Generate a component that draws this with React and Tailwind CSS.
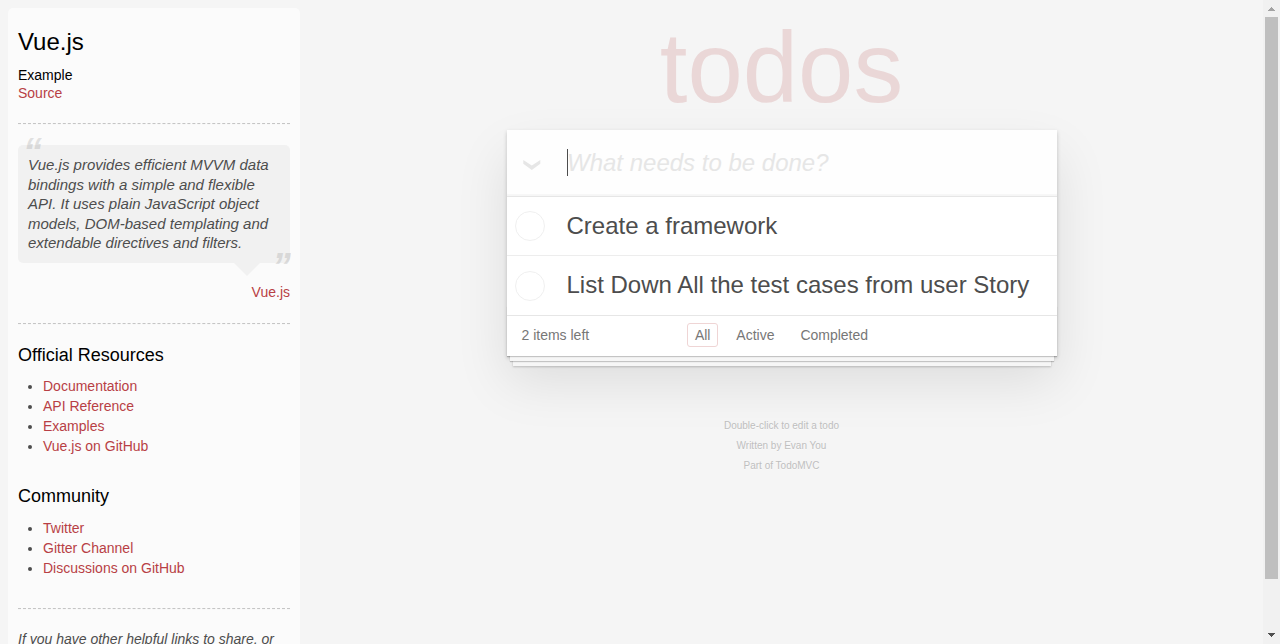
const resources = ['Documentation', 'API Reference', 'Examples', 'Vue.js on GitHub'];
const community = ['Twitter', 'Gitter Channel', 'Discussions on GitHub'];
const todos = ['Create a framework', 'List Down All the test cases from user Story'];
const filters = ['All', 'Active', 'Completed'];

function Divider() {
  return <hr className="my-5 border-0 border-y border-dashed border-t-[#c5c5c5] border-b-[#f7f7f7]" />;
}

function LinkList({ title, links }) {
  return (
    <section>
      <h4 className="mb-2.5 text-[18px] leading-[21.6px] text-black">{title}</h4>
      <ul className="mb-[30px] ml-[25px] list-disc">
        {links.map((link) => (
          <li key={link} className="leading-5">
            <a className="text-[#b83f45]">{link}</a>
          </li>
        ))}
      </ul>
    </section>
  );
}

function Sidebar() {
  return (
    <aside className="mt-2 ml-2 h-[900px] w-[292px] shrink-0 rounded-[5px] bg-white/60 p-2.5">
      <h3 className="mt-2.5 text-[24px] leading-[28.8px] text-black">Vue.js</h3>
      <h5 className="mt-2.5 leading-[16.8px] text-black">Example</h5>
      <a className="block text-[#b83f45]">Source</a>
      <Divider />
      <blockquote className="relative mb-[60px] rounded-[5px] bg-black/[0.04] p-2.5 italic">
        <span className="absolute -top-3 left-[5px] text-[38px] leading-[38px] font-bold opacity-15">“</span>
        <p className="text-[15px] leading-[19.5px]">
          Vue.js provides efficient MVVM data bindings with a simple and flexible API. It uses plain
          JavaScript object models, DOM-based templating and extendable directives and filters.
        </p>
        <span className="absolute -right-px -bottom-[23px] text-[38px] leading-[38px] font-bold opacity-15">”</span>
        <span className="absolute top-full right-[30px] border-[13px] border-transparent border-t-black/[0.04]" />
        <footer className="absolute right-0 -bottom-10 not-italic">
          <a className="text-[#b83f45]">Vue.js</a>
        </footer>
      </blockquote>
      <Divider />
      <LinkList title="Official Resources" links={resources} />
      <LinkList title="Community" links={community} />
      <Divider />
      <p className="leading-[19.6px] italic">
        If you have other helpful links to share, or find any of the links above no longer work, please let us know.
      </p>
    </aside>
  );
}

function TodoCard() {
  return (
    <section className="relative bg-white shadow-[0_2px_4px_0_rgba(0,0,0,0.2),0_25px_50px_0_rgba(0,0,0,0.1)]">
      <div className="flex h-[65.6px] items-center bg-black/[0.003] text-[24px] shadow-[inset_0_-2px_1px_rgba(0,0,0,0.03)]">
        <svg className="mt-[5px] ml-4 h-[10px] w-[18px]" viewBox="0 0 18 10" fill="#e6e6e6">
          <path d="M0.3 0 8.8 5.4 17.3 0V3.8L8.8 10 0.3 3.8Z" />
        </svg>
        <span className="ml-[26px] h-[27px] w-px bg-[#4d4d4d]" />
        <span className="-ml-[0.5px] leading-[33.6px] text-[#e6e6e6] italic">What needs to be done?</span>
      </div>
      <ul className="divide-y divide-[#ededed] border-t border-[#e6e6e6]">
        {todos.map((todo) => (
          <li key={todo} className="flex items-center text-[24px]">
            <svg className="mt-px ml-2 h-[30px] w-[30px]" viewBox="0 0 30 30" fill="none" stroke="#ededed">
              <circle cx="15" cy="15" r="14.5" strokeWidth="0.9" />
            </svg>
            <span className="ml-[22px] py-[15px] leading-[28.8px]">{todo}</span>
          </li>
        ))}
      </ul>
      <footer className="grid h-[41px] grid-cols-[1fr_auto_1fr] items-start border-t border-[#e6e6e6] px-[15px] pt-2.5 text-[#777]">
        <span>2 items left</span>
        <ul className="-mt-[3px] flex gap-[9.9px]">
          {filters.map((filter) => (
            <li
              key={filter}
              className={`rounded-[3px] border px-[7px] py-[3px] leading-4 ${
                filter === 'All' ? 'border-[#efd5d5]' : 'border-transparent'
              }`}
            >
              {filter}
            </li>
          ))}
        </ul>
      </footer>
      <div className="pointer-events-none absolute inset-x-0 bottom-0 h-[50px] shadow-[0_1px_1px_rgba(0,0,0,0.2),0_8px_0_-3px_#f6f6f6,0_9px_1px_-3px_rgba(0,0,0,0.2),0_16px_0_-6px_#f6f6f6,0_17px_2px_-6px_rgba(0,0,0,0.2)]" />
    </section>
  );
}

function Scrollbar() {
  return (
    <div className="flex h-full w-[17px] shrink-0 flex-col items-center bg-[#f1f1f1]">
      <svg className="h-[17px] w-[17px] shrink-0" viewBox="0 0 17 17" fill="#a3a3a3" shapeRendering="crispEdges">
        <path d="M5 11V10H6V9H7V8H8V7H9V8H10V9H11V10H12V11Z" />
      </svg>
      <div className="h-[562px] w-[13px] bg-[#bfbfbf]" />
      <svg className="mt-auto h-[17px] w-[17px] shrink-0" viewBox="0 0 17 17" fill="#505050" shapeRendering="crispEdges">
        <path d="M5 6V7H6V8H7V9H8V10H9V9H10V8H11V7H12V6Z" />
      </svg>
    </div>
  );
}

export default function App() {
  return (
    <div className="flex h-screen overflow-hidden bg-[#f5f5f5] font-['Liberation_Sans',Arial,sans-serif] text-[14px] leading-[19.6px] text-[#4d4d4d]">
      <Sidebar />
      <main className="flex flex-1 justify-center">
        <div className="w-[550px]">
          <h1 className="h-[130px] pt-1 text-center text-[99.5px] leading-[128px] text-[rgba(175,47,47,0.15)]">
            todos
          </h1>
          <TodoCard />
          <footer className="mt-[65px] flex flex-col gap-2.5 text-center text-[10px] leading-[10px] text-[#bfbfbf] [text-shadow:0_1px_0_rgba(255,255,255,0.5)]">
            <p>Double-click to edit a todo</p>
            <p>Written by Evan You</p>
            <p>Part of TodoMVC</p>
          </footer>
        </div>
      </main>
      <Scrollbar />
    </div>
  );
}
